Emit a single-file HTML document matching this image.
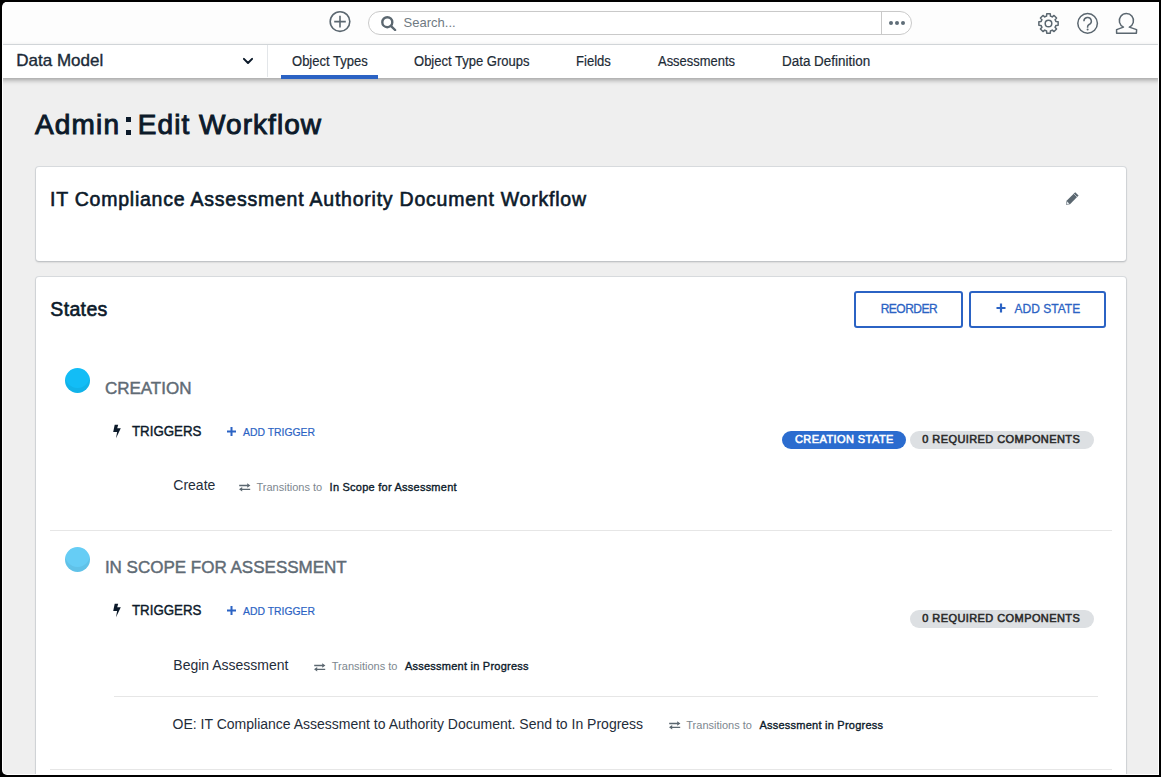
<!DOCTYPE html>
<html><head><meta charset="utf-8">
<style>
*{box-sizing:border-box;margin:0;padding:0}
html,body{width:1161px;height:777px;overflow:hidden;background:#000;font-family:"Liberation Sans",sans-serif}
.win{position:absolute;left:2px;top:2px;width:1157px;height:773px;background:#fff;border-radius:5px 0 0 5px;overflow:hidden}
.app{position:absolute;left:1px;top:0;width:1155px;height:772px;background:#efefef;overflow:hidden;border-radius:4px 0 0 4px}
.L{position:absolute;left:-3px;top:-2px;width:1161px;height:777px}
.t{position:absolute;white-space:nowrap;line-height:1}
.topbar{position:absolute;left:0;top:0;width:1161px;height:45px;background:#fdfdfd;border-bottom:1px solid #dfe3e6}
.subnav{position:absolute;left:0;top:45px;width:1161px;height:33px;background:#fff;box-shadow:0 2px 5px rgba(0,0,0,.35)}
.card{position:absolute;background:#fff;border-radius:3px;box-shadow:0 0 0 1px rgba(190,198,205,.45),0 1px 2px rgba(0,0,0,.25)}
.sep{position:absolute;height:1px;background:#e6e6e6}
.btn{position:absolute;height:37px;border:2px solid #2b63c4;border-radius:3px;background:#fff}
.badge{position:absolute;height:18px;border-radius:9px}
.dot{position:absolute;width:25px;height:25px;border-radius:50%}
svg{position:absolute}
</style></head><body>
<div class="win"><div class="app"><div class="L">
<div class="topbar"></div>
<div class="subnav"></div>
<div style="position:absolute;left:267px;top:45px;width:1px;height:32px;background:#e3e6e9"></div>
<svg style="left:329px;top:11px" width="22" height="22" viewBox="0 0 22 22"><circle cx="11" cy="10.6" r="9.8" fill="none" stroke="#5b6770" stroke-width="1.6"/><path d="M11 4.8v11.6M5.2 10.6h11.6" stroke="#5b6770" stroke-width="1.6"/></svg>
<div style="position:absolute;left:368px;top:11px;width:544px;height:24px;border:1px solid #c9c9c9;border-radius:12px;background:#fff"></div>
<div style="position:absolute;left:881px;top:12px;width:1px;height:22px;background:#c9c9c9"></div>
<svg style="left:380px;top:15px" width="17" height="16" viewBox="0 0 17 16"><circle cx="7.3" cy="7.2" r="5" fill="none" stroke="#5b6770" stroke-width="2.4"/><path d="M10.8 10.8l4.3 4.2" stroke="#5b6770" stroke-width="2.4" stroke-linecap="round"/></svg>
<div class="t" style="left:403.6px;top:16.0px;font-size:13px;color:#6f7a82;font-weight:400;">Search...</div>
<div style="position:absolute;left:889px;top:21px;width:4px;height:4px;border-radius:50%;background:#5f6d78"></div>
<div style="position:absolute;left:895px;top:21px;width:4px;height:4px;border-radius:50%;background:#5f6d78"></div>
<div style="position:absolute;left:901px;top:21px;width:4px;height:4px;border-radius:50%;background:#5f6d78"></div>
<svg style="left:1037.3px;top:11.8px" width="23" height="23" viewBox="0 0 23 23"><path fill="none" stroke="#5b6770" stroke-width="1.5" stroke-linejoin="round" d="M18.52 8.59 L18.85 9.55 L21.14 9.74 L21.14 13.26 L18.85 13.45 L18.52 14.41 L18.07 15.32 L19.56 17.07 L17.07 19.56 L15.32 18.07 L14.41 18.52 L13.45 18.85 L13.26 21.14 L9.74 21.14 L9.55 18.85 L8.59 18.52 L7.68 18.07 L5.93 19.56 L3.44 17.07 L4.93 15.32 L4.48 14.41 L4.15 13.45 L1.86 13.26 L1.86 9.74 L4.15 9.55 L4.48 8.59 L4.93 7.68 L3.44 5.93 L5.93 3.44 L7.68 4.93 L8.59 4.48 L9.55 4.15 L9.74 1.86 L13.26 1.86 L13.45 4.15 L14.41 4.48 L15.32 4.93 L17.07 3.44 L19.56 5.93 L18.07 7.68Z"/><circle cx="11.5" cy="11.5" r="3.3" fill="none" stroke="#5b6770" stroke-width="1.5"/></svg>
<svg style="left:1076px;top:12px" width="23" height="23" viewBox="0 0 23 23"><circle cx="11.6" cy="11.35" r="9.8" fill="none" stroke="#5b6770" stroke-width="1.5"/><path d="M7.9 9.2a3.7 3.7 0 1 1 5.2 3.3c-1.1 .6-1.5 1.2-1.5 2.3v1" fill="none" stroke="#5b6770" stroke-width="1.5"/><circle cx="11.6" cy="17.4" r="1" fill="#5b6770"/></svg>
<svg style="left:1115px;top:12px" width="23" height="23" viewBox="0 0 23 23"><path fill="none" stroke="#5b6770" stroke-width="1.5" stroke-linejoin="round" d="M8.5 15.1 A7.1 7.1 0 1 1 14.3 15.1 L21.6 17.6 L21.4 21.3 L1.6 21.3 L1.6 17.6 Z"/></svg>
<div class="t" style="left:16.3px;top:51.5px;font-size:17px;color:#1b2a38;font-weight:400;-webkit-text-stroke:0.35px #1b2a38;">Data Model</div>
<svg style="left:241.6px;top:57px" width="12" height="8" viewBox="0 0 12 8"><path d="M1.9 1.9l4.1 4.1 4.1-4.1" fill="none" stroke="#0c1a2a" stroke-width="2" stroke-linecap="round" stroke-linejoin="round"/></svg>
<div class="t" style="left:291.6px;top:54.1px;font-size:14px;color:#1d2b36;font-weight:400;-webkit-text-stroke:0.2px #1d2b36;transform:scaleX(0.93);transform-origin:0 0;">Object Types</div>
<div class="t" style="left:414.3px;top:54.1px;font-size:14px;color:#1d2b36;font-weight:400;-webkit-text-stroke:0.2px #1d2b36;transform:scaleX(0.93);transform-origin:0 0;">Object Type Groups</div>
<div class="t" style="left:576.3px;top:54.1px;font-size:14px;color:#1d2b36;font-weight:400;-webkit-text-stroke:0.2px #1d2b36;transform:scaleX(0.935);transform-origin:0 0;">Fields</div>
<div class="t" style="left:658.0px;top:54.1px;font-size:14px;color:#1d2b36;font-weight:400;-webkit-text-stroke:0.2px #1d2b36;transform:scaleX(0.925);transform-origin:0 0;">Assessments</div>
<div class="t" style="left:781.8px;top:54.1px;font-size:14px;color:#1d2b36;font-weight:400;-webkit-text-stroke:0.2px #1d2b36;transform:scaleX(0.96);transform-origin:0 0;">Data Definition</div>
<div style="position:absolute;left:281px;top:75px;width:97px;height:4px;background:#2b63c4"></div>
<div class="t" style="left:35.0px;top:111.3px;font-size:28px;color:#0c1a2a;font-weight:400;letter-spacing:1.15px;-webkit-text-stroke:0.95px #0c1a2a;">Admin</div>
<div style="position:absolute;left:126px;top:117px;width:5px;height:5px;background:#0c1a2a"></div>
<div style="position:absolute;left:126px;top:130px;width:5px;height:5px;background:#0c1a2a"></div>
<div class="t" style="left:137.8px;top:111.3px;font-size:28px;color:#0c1a2a;font-weight:400;letter-spacing:1.05px;-webkit-text-stroke:0.95px #0c1a2a;">Edit Workflow</div>
<div class="card" style="left:36px;top:167px;width:1090px;height:94px"></div>
<div class="t" style="left:50.0px;top:189.5px;font-size:19.5px;color:#0c1a2a;font-weight:400;letter-spacing:0.77px;-webkit-text-stroke:0.6px #0c1a2a;">IT Compliance Assessment Authority Document Workflow</div>
<svg style="left:1065px;top:191.3px" width="15" height="15" viewBox="0 0 15 15"><path d="M1 13.8 L1.6 9.8 L10.2 1.2 L13.6 4.6 L5 13.2 Z" fill="#5b6770"/><path d="M2.1 10.4 L4.4 12.7 L1.5 13.3 Z" fill="#e6ecf0"/><path d="M8.7 2.7 L12.1 6.1" stroke="#d5dde2" stroke-width="0.7"/></svg>
<div class="card" style="left:36px;top:277px;width:1090px;height:600px"></div>
<div class="t" style="left:50.3px;top:299.8px;font-size:19.5px;color:#0c1a2a;font-weight:400;letter-spacing:0.35px;-webkit-text-stroke:0.6px #0c1a2a;">States</div>
<div class="btn" style="left:854px;top:291px;width:109px"></div>
<div class="t" style="left:880.7px;top:303.4px;font-size:12px;color:#2b63c4;font-weight:400;letter-spacing:-0.5px;-webkit-text-stroke:0.3px #2b63c4;">REORDER</div>
<div class="btn" style="left:969px;top:291px;width:137px"></div>
<svg style="left:996px;top:303px" width="10" height="10" viewBox="0 0 10 10"><path d="M5 0.5v9M0.5 5h9" stroke="#2b63c4" stroke-width="2.2"/></svg>
<div class="t" style="left:1014.6px;top:303.4px;font-size:12px;color:#2b63c4;font-weight:400;-webkit-text-stroke:0.3px #2b63c4;">ADD STATE</div>
<div class="dot" style="left:65px;top:368.0px;background:#12bdf6;box-shadow:inset 0 -5px 0 rgba(0,0,0,.05)"></div>
<div class="t" style="left:104.9px;top:379.7px;font-size:17px;color:#5f6b75;font-weight:400;-webkit-text-stroke:0.45px #5f6b75;">CREATION</div>
<svg style="left:112px;top:424.3px" width="10" height="15" viewBox="0 0 10 15"><path d="M2.7 0.8L6.2 0.8L5.2 4.3L8.8 4.3L4 14.2L5.1 7.9L1.2 7.9Z" fill="#0c1a2a"/></svg>
<div class="t" style="left:131.5px;top:423.9px;font-size:14px;color:#0c1a2a;font-weight:400;-webkit-text-stroke:0.4px #0c1a2a;transform:scaleX(0.95);transform-origin:0 0;">TRIGGERS</div>
<svg style="left:227px;top:427.3px" width="9" height="9" viewBox="0 0 9 9"><path d="M4.5 0v9M0 4.5h9" stroke="#2b63c4" stroke-width="2"/></svg>
<div class="t" style="left:243.3px;top:426.5px;font-size:11px;color:#2b63c4;font-weight:400;-webkit-text-stroke:0.2px #2b63c4;transform:scaleX(0.945);transform-origin:0 0;">ADD TRIGGER</div>
<div class="badge" style="left:782px;top:430.5px;width:124px;background:#2b6ccf"></div>
<div class="t" style="left:795.0px;top:433.7px;font-size:11px;color:#fff;font-weight:400;letter-spacing:0.42px;-webkit-text-stroke:0.55px #fff;">CREATION STATE</div>
<div class="badge" style="left:910px;top:430.5px;width:184px;background:#dde0e3"></div>
<div class="t" style="left:922.3px;top:433.7px;font-size:11px;color:#2a2a2a;font-weight:400;letter-spacing:0.42px;-webkit-text-stroke:0.55px #2a2a2a;">0 REQUIRED COMPONENTS</div>
<div class="t" style="left:173.3px;top:478.0px;font-size:14px;color:#1f2d3a;font-weight:400;">Create</div>
<svg style="left:238.7px;top:481px" width="13" height="12" viewBox="0 0 13 12"><path d="M0.2 4.5H8.8M2.6 8.3H11.2" stroke="#5b6770" stroke-width="1.3"/><path d="M8.2 2.2L11.4 4.5L8.2 6.8Z M3.2 6L0 8.3L3.2 10.6Z" fill="#5b6770"/></svg>
<div class="t" style="left:256.5px;top:481.7px;font-size:11px;color:#7d878f;font-weight:400;">Transitions to</div>
<div class="t" style="left:329.6px;top:481.7px;font-size:11px;color:#0c1a2a;font-weight:400;letter-spacing:0.24px;-webkit-text-stroke:0.35px #0c1a2a;">In Scope for Assessment</div>
<div class="sep" style="left:50px;top:530px;width:1062px"></div>
<div class="dot" style="left:65px;top:547.0px;background:#66cdf5;box-shadow:inset 0 -5px 0 rgba(0,0,0,.05)"></div>
<div class="t" style="left:104.9px;top:558.7px;font-size:17px;color:#5f6b75;font-weight:400;-webkit-text-stroke:0.45px #5f6b75;">IN SCOPE FOR ASSESSMENT</div>
<svg style="left:112px;top:603.3px" width="10" height="15" viewBox="0 0 10 15"><path d="M2.7 0.8L6.2 0.8L5.2 4.3L8.8 4.3L4 14.2L5.1 7.9L1.2 7.9Z" fill="#0c1a2a"/></svg>
<div class="t" style="left:131.5px;top:602.9px;font-size:14px;color:#0c1a2a;font-weight:400;-webkit-text-stroke:0.4px #0c1a2a;transform:scaleX(0.95);transform-origin:0 0;">TRIGGERS</div>
<svg style="left:227px;top:606.3px" width="9" height="9" viewBox="0 0 9 9"><path d="M4.5 0v9M0 4.5h9" stroke="#2b63c4" stroke-width="2"/></svg>
<div class="t" style="left:243.3px;top:605.5px;font-size:11px;color:#2b63c4;font-weight:400;-webkit-text-stroke:0.2px #2b63c4;transform:scaleX(0.945);transform-origin:0 0;">ADD TRIGGER</div>
<div class="badge" style="left:910px;top:609.5px;width:184px;background:#dde0e3"></div>
<div class="t" style="left:922.3px;top:612.7px;font-size:11px;color:#2a2a2a;font-weight:400;letter-spacing:0.42px;-webkit-text-stroke:0.55px #2a2a2a;">0 REQUIRED COMPONENTS</div>
<div class="t" style="left:173.3px;top:657.6px;font-size:14px;color:#1f2d3a;font-weight:400;">Begin Assessment</div>
<svg style="left:314px;top:660.5px" width="13" height="12" viewBox="0 0 13 12"><path d="M0.2 4.5H8.8M2.6 8.3H11.2" stroke="#5b6770" stroke-width="1.3"/><path d="M8.2 2.2L11.4 4.5L8.2 6.8Z M3.2 6L0 8.3L3.2 10.6Z" fill="#5b6770"/></svg>
<div class="t" style="left:331.8px;top:661.2px;font-size:11px;color:#7d878f;font-weight:400;">Transitions to</div>
<div class="t" style="left:404.9px;top:661.2px;font-size:11px;color:#0c1a2a;font-weight:400;letter-spacing:0.24px;-webkit-text-stroke:0.35px #0c1a2a;">Assessment in Progress</div>
<div class="sep" style="left:114px;top:696px;width:984px"></div>
<div class="t" style="left:172.6px;top:717.4px;font-size:14px;color:#1f2d3a;font-weight:400;">OE: IT Compliance Assessment to Authority Document. Send to In Progress</div>
<svg style="left:668.5px;top:719.3px" width="13" height="12" viewBox="0 0 13 12"><path d="M0.2 4.5H8.8M2.6 8.3H11.2" stroke="#5b6770" stroke-width="1.3"/><path d="M8.2 2.2L11.4 4.5L8.2 6.8Z M3.2 6L0 8.3L3.2 10.6Z" fill="#5b6770"/></svg>
<div class="t" style="left:686.3px;top:720.0px;font-size:11px;color:#7d878f;font-weight:400;">Transitions to</div>
<div class="t" style="left:759.4px;top:720.0px;font-size:11px;color:#0c1a2a;font-weight:400;letter-spacing:0.24px;-webkit-text-stroke:0.35px #0c1a2a;">Assessment in Progress</div>
<div class="sep" style="left:50px;top:769px;width:1062px"></div>
</div></div></div>
</body></html>
